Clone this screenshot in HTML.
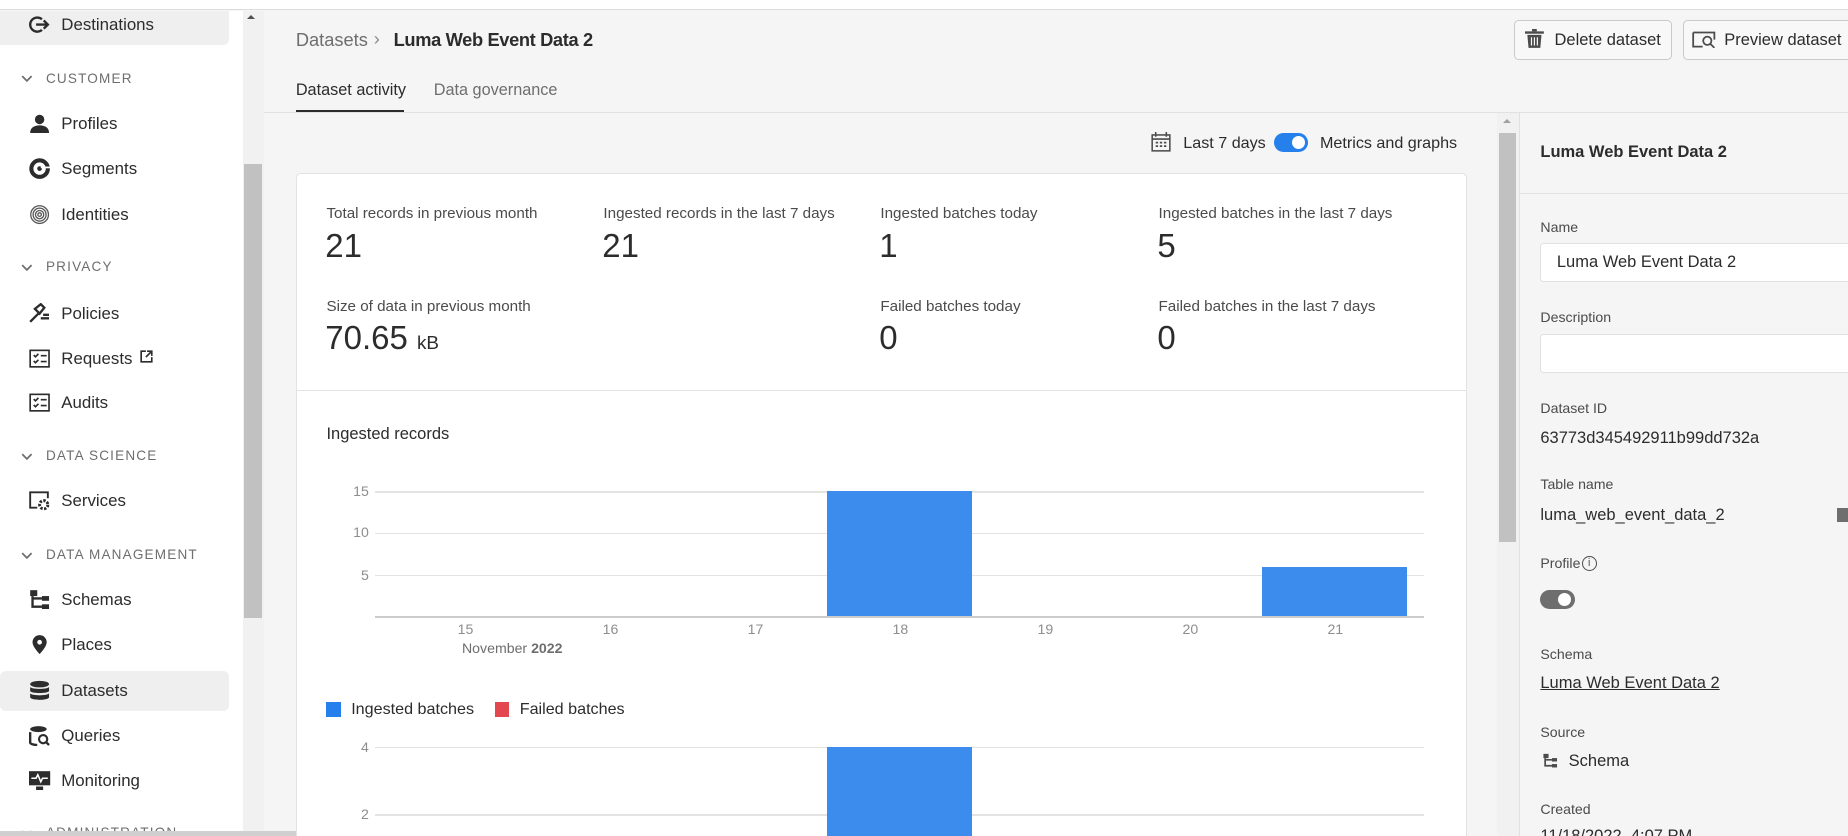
<!DOCTYPE html>
<html><head><meta charset="utf-8"><style>
html,body{margin:0;padding:0;overflow:hidden;background:#f5f5f5;width:1848px;height:836px}
#r{position:relative;width:1568px;height:709px;zoom:1.17857;overflow:hidden;font-family:"Liberation Sans",sans-serif;color:#2c2c2c;background:#f5f5f5}
.a{position:absolute;white-space:nowrap}
.ni{font-size:14.3px;color:#2c2c2c;line-height:18px}
.sec{font-size:11.5px;color:#6e6e6e;letter-spacing:1px;line-height:14px}
.ic{position:absolute;left:25px;width:18px;height:18px}
.lbl{font-size:12.9px;color:#4b4b4b}
.val{font-size:28px;color:#2c2c2c;font-weight:300}
.gl{position:absolute;left:318px;width:890px;height:1px;background:#e3e3e3}
.yl{position:absolute;width:30px;text-align:right;font-size:12px;color:#8e8e8e}
.xl{position:absolute;font-size:12px;color:#8e8e8e;width:40px;text-align:center}
.pl{font-size:12px;color:#4b4b4b}
.pv{font-size:14px;color:#2c2c2c}
.bar{position:absolute;background:#3b8ced}
.chev{position:absolute;left:18px;width:10px;height:6px}
</style></head><body><div id="r">
<div class="a" style="left:0;top:0;width:1568px;height:8px;background:#fff;border-bottom:1px solid #dcdcdc"></div>
<div class="a" style="left:0;top:9px;width:206px;height:700px;background:#fff"></div>
<div class="a" style="left:0;top:9px;width:194px;height:29px;background:#efefef;border-radius:0 0 5px 0"></div>
<div class="a" style="left:0;top:569px;width:194px;height:34px;background:#efefef;border-radius:5px"></div>
<div class="a" style="left:206px;top:9px;width:18px;height:700px;background:#f1f1f1"></div>
<div class="a" style="left:207px;top:139px;width:15px;height:385px;background:#c1c1c1"></div>
<div class="a" style="left:210px;top:13px;width:0;height:0;border-left:4px solid transparent;border-right:4px solid transparent;border-bottom:4px solid #505050"></div>

<svg class="ic" style="top:12px" viewBox="0 0 18 18"><path d="M11 4.5A6 6 0 1 0 11 13.5" fill="none" stroke="#2c2c2c" stroke-width="2"/><path d="M6 9h10M12.5 5.5L16 9l-3.5 3.5" fill="none" stroke="#2c2c2c" stroke-width="2"/></svg>
<div class="a ni" style="left:52px;top:12px">Destinations</div>
<svg class="chev" style="top:64px" viewBox="0 0 10 6"><path d="M1 1l4 4 4-4" fill="none" stroke="#6e6e6e" stroke-width="1.5"/></svg><div class="a sec" style="left:39px;top:60px">CUSTOMER</div>
<svg class="ic" style="top:96px" viewBox="0 0 18 18"><circle cx="9" cy="5.5" r="4" fill="#2c2c2c"/><path d="M1 17c0-5 4-6.5 8-6.5s8 1.5 8 6.5z" fill="#2c2c2c"/></svg>
<div class="a ni" style="left:52px;top:96px">Profiles</div>
<svg class="ic" style="top:134px" viewBox="0 0 18 18"><circle cx="9" cy="9" r="7" fill="none" stroke="#2c2c2c" stroke-width="3.5"/><circle cx="9" cy="9" r="2" fill="#2c2c2c"/><path d="M10 8h8" stroke="#fff" stroke-width="1.5"/></svg>
<div class="a ni" style="left:52px;top:134px">Segments</div>
<svg class="ic" style="top:173px" viewBox="0 0 18 18" fill="none" stroke="#555" stroke-width="1.1"><circle cx="9" cy="9" r="7.5"/><circle cx="9" cy="9" r="5.5"/><circle cx="9" cy="9" r="3.5"/><circle cx="9" cy="9" r="1.5"/></svg>
<div class="a ni" style="left:52px;top:173px">Identities</div>
<svg class="chev" style="top:224px" viewBox="0 0 10 6"><path d="M1 1l4 4 4-4" fill="none" stroke="#6e6e6e" stroke-width="1.5"/></svg><div class="a sec" style="left:39px;top:220px">PRIVACY</div>
<svg class="ic" style="top:257px" viewBox="0 0 18 18"><path d="M1 16l7-7M5 5l5-4 3 3-4 5zM10 13h7M12 10h5" stroke="#2c2c2c" stroke-width="2" fill="none"/></svg>
<div class="a ni" style="left:52px;top:257px">Policies</div>
<svg class="ic" style="top:295px" viewBox="0 0 18 18" fill="none" stroke="#2c2c2c" stroke-width="1.4"><rect x="1" y="2" width="16" height="14"/><path d="M4 6l1.5 1.5L8 5M4 11l1.5 1.5L8 10M10 6.5h5M10 11.5h5"/></svg>
<div class="a ni" style="left:52px;top:295px">Requests</div>
<svg class="a" style="left:119px;top:297px" width="11" height="11" viewBox="0 0 11 11" fill="none" stroke="#2c2c2c" stroke-width="1.4"><path d="M5 1H1v9h9V6M6 1h4v4M10 1L5 6"/></svg>
<svg class="ic" style="top:333px" viewBox="0 0 18 18" fill="none" stroke="#2c2c2c" stroke-width="1.4"><rect x="1" y="2" width="16" height="14"/><path d="M4 6l1.5 1.5L8 5M4 11l1.5 1.5L8 10M10 6.5h5M10 11.5h5"/></svg>
<div class="a ni" style="left:52px;top:333px">Audits</div>
<svg class="chev" style="top:384px" viewBox="0 0 10 6"><path d="M1 1l4 4 4-4" fill="none" stroke="#6e6e6e" stroke-width="1.5"/></svg><div class="a sec" style="left:39px;top:380px">DATA SCIENCE</div>
<svg class="ic" style="top:416px" viewBox="0 0 18 18"><path d="M7 15H1V2h15v5" fill="none" stroke="#2c2c2c" stroke-width="1.6"/><circle cx="12.5" cy="12.5" r="3.5" fill="none" stroke="#2c2c2c" stroke-width="2.5" stroke-dasharray="2 1.2"/></svg>
<div class="a ni" style="left:52px;top:416px">Services</div>
<svg class="chev" style="top:468px" viewBox="0 0 10 6"><path d="M1 1l4 4 4-4" fill="none" stroke="#6e6e6e" stroke-width="1.5"/></svg><div class="a sec" style="left:39px;top:464px">DATA MANAGEMENT</div>
<svg class="ic" style="top:500px" viewBox="0 0 18 18" fill="#2c2c2c"><rect x="1" y="1" width="6" height="5"/><rect x="11" y="6" width="6" height="4"/><rect x="11" y="13" width="6" height="4"/><path d="M3 6v9h8M3 8h8" stroke="#2c2c2c" stroke-width="2" fill="none"/></svg>
<div class="a ni" style="left:52px;top:500px">Schemas</div>
<svg class="ic" style="top:538px" viewBox="0 0 18 18"><path d="M9 1a6 6 0 0 1 6 6c0 4-6 10-6 10S3 11 3 7a6 6 0 0 1 6-6z" fill="#2c2c2c"/><circle cx="9" cy="7" r="2" fill="#fff"/></svg>
<div class="a ni" style="left:52px;top:538px">Places</div>
<svg class="ic" style="top:577px" viewBox="0 0 18 18" fill="#2c2c2c"><ellipse cx="9" cy="3.5" rx="8" ry="2.8"/><path d="M1 6c2 2 14 2 16 0v3.5c-2 2-14 2-16 0zM1 11.5c2 2 14 2 16 0V15c-2 2.5-14 2.5-16 0z"/></svg>
<div class="a ni" style="left:52px;top:577px">Datasets</div>
<svg class="ic" style="top:615px" viewBox="0 0 18 18"><ellipse cx="8" cy="3.5" rx="7" ry="2.5" fill="#2c2c2c"/><path d="M1 6v9c0 1 3 2 6 2" fill="none" stroke="#2c2c2c" stroke-width="2"/><circle cx="12" cy="12" r="3.5" fill="none" stroke="#2c2c2c" stroke-width="1.8"/><path d="M14.5 14.5L17 17" stroke="#2c2c2c" stroke-width="2"/></svg>
<div class="a ni" style="left:52px;top:615px">Queries</div>
<svg class="ic" style="top:653px" viewBox="0 0 18 18"><rect x="0" y="1" width="18" height="12" fill="#2c2c2c"/><path d="M2 7h4l1.5-3 2.5 6 1.5-3H16" fill="none" stroke="#fff" stroke-width="1.3"/><rect x="6" y="14" width="6" height="3" fill="#2c2c2c"/></svg>
<div class="a ni" style="left:52px;top:653px">Monitoring</div>
<svg class="chev" style="top:704px" viewBox="0 0 10 6"><path d="M1 1l4 4 4-4" fill="none" stroke="#6e6e6e" stroke-width="1.5"/></svg><div class="a sec" style="left:39px;top:700px">ADMINISTRATION</div>
<div class="a" style="left:0;top:705px;width:375px;height:4px;background:#d0d0d0"></div>

<div class="a" style="left:224px;top:95px;width:1344px;height:1px;background:#e1e1e1"></div>
<div class="a" style="left:251px;top:25px;font-size:15.5px;color:#6e6e6e">Datasets</div>
<div class="a" style="left:317px;top:24px;font-size:16px;color:#8e8e8e">&#8250;</div>
<div class="a" style="left:334px;top:25px;font-size:15.5px;font-weight:bold;color:#2c2c2c;letter-spacing:-0.3px">Luma Web Event Data 2</div>
<div class="a" style="left:251px;top:69px;font-size:13.8px;color:#2c2c2c">Dataset activity</div>
<div class="a" style="left:251px;top:93px;width:92px;height:2px;background:#2c2c2c"></div>
<div class="a" style="left:368px;top:69px;font-size:13.8px;color:#6e6e6e">Data governance</div>
<div class="a" style="left:1285px;top:17px;width:132px;height:32px;border:1px solid #cacaca;border-radius:4px;background:#f8f8f8"></div>
<svg class="a" style="left:1294px;top:25px" width="16" height="16" viewBox="0 0 16 16" fill="#4b4b4b"><rect x="0" y="2" width="16" height="2"/><rect x="6" y="0" width="4" height="2"/><path d="M2 5h12l-1 11H3z"/><path d="M5.5 7v7M8 7v7M10.5 7v7" stroke="#f8f8f8" stroke-width="1"/></svg>
<div class="a" style="left:1319px;top:26px;font-size:14px;color:#2c2c2c">Delete dataset</div>
<div class="a" style="left:1428px;top:17px;width:150px;height:32px;border:1px solid #cacaca;border-radius:4px;background:#f8f8f8"></div>
<svg class="a" style="left:1436px;top:25px" width="20" height="16" viewBox="0 0 20 16" fill="none" stroke="#4b4b4b" stroke-width="1.5"><path d="M1 3h18v6M9 15H1V3"/><circle cx="13" cy="10" r="3.5"/><path d="M15.5 12.5L19 16"/></svg>
<div class="a" style="left:1463px;top:26px;font-size:14px;color:#2c2c2c">Preview dataset</div>

<svg class="a" style="left:977px;top:112px" width="17" height="17" viewBox="0 0 17 17" fill="none" stroke="#4b4b4b" stroke-width="1.3"><rect x="1" y="2.5" width="15" height="13.5"/><path d="M4 0v4M13 0v4M1 6h15"/><path d="M4 9h2M7.5 9h2M11 9h2M4 12h2M7.5 12h2M11 12h2" stroke-width="1.5"/></svg>
<div class="a" style="left:1004px;top:114px;font-size:13.7px">Last 7 days</div>
<div class="a" style="left:1081px;top:113px;width:29px;height:16px;border-radius:8px;background:#2680eb"></div>
<div class="a" style="left:1096px;top:115.5px;width:11px;height:11px;border-radius:6px;background:#fff"></div>
<div class="a" style="left:1120px;top:114px;font-size:13.7px">Metrics and graphs</div>

<div class="a" style="left:251px;top:147px;width:992px;height:580px;background:#fff;border:1px solid #e3e3e3;border-radius:4px"></div>
<div class="a" style="left:252px;top:331px;width:992px;height:1px;background:#e3e3e3"></div>
<div class="a lbl" style="left:277px;top:174px">Total records in previous month</div>
<div class="a val" style="left:276px;top:193px">21</div>
<div class="a lbl" style="left:512px;top:174px">Ingested records in the last 7 days</div>
<div class="a val" style="left:511px;top:193px">21</div>
<div class="a lbl" style="left:747px;top:174px">Ingested batches today</div>
<div class="a val" style="left:746px;top:193px">1</div>
<div class="a lbl" style="left:983px;top:174px">Ingested batches in the last 7 days</div>
<div class="a val" style="left:982px;top:193px">5</div>
<div class="a lbl" style="left:277px;top:253px">Size of data in previous month</div>
<div class="a val" style="left:276px;top:271px">70.65 <span style="font-size:16px;font-weight:normal">kB</span></div>
<div class="a lbl" style="left:747px;top:253px">Failed batches today</div>
<div class="a val" style="left:746px;top:271px">0</div>
<div class="a lbl" style="left:983px;top:253px">Failed batches in the last 7 days</div>
<div class="a val" style="left:982px;top:271px">0</div>

<div class="a" style="left:277px;top:361px;font-size:14px">Ingested records</div>
<div class="gl" style="top:417px"></div><div class="gl" style="top:452px"></div><div class="gl" style="top:488px"></div><div class="gl" style="top:523px;background:#ccc"></div>
<div class="yl" style="left:283px;top:410px">15</div><div class="yl" style="left:283px;top:445px">10</div><div class="yl" style="left:283px;top:481px">5</div>
<div class="bar" style="left:702px;top:417px;width:123px;height:106px"></div>
<div class="bar" style="left:1071px;top:481px;width:123px;height:42px"></div>
<div class="xl" style="left:375px;top:527px">15</div><div class="xl" style="left:498px;top:527px">16</div><div class="xl" style="left:621px;top:527px">17</div><div class="xl" style="left:744px;top:527px">18</div><div class="xl" style="left:867px;top:527px">19</div><div class="xl" style="left:990px;top:527px">20</div><div class="xl" style="left:1113px;top:527px">21</div>
<div class="a" style="left:392px;top:543px;font-size:12px;color:#6e6e6e">November <b>2022</b></div>

<div class="a" style="left:277px;top:596px;width:12px;height:12px;background:#2680eb"></div>
<div class="a" style="left:298px;top:594px;font-size:13.7px">Ingested batches</div>
<div class="a" style="left:420px;top:596px;width:12px;height:12px;background:#e34850"></div>
<div class="a" style="left:441px;top:594px;font-size:13.7px">Failed batches</div>
<div class="gl" style="top:634px"></div><div class="gl" style="top:691px"></div>
<div class="yl" style="left:283px;top:627px">4</div><div class="yl" style="left:283px;top:684px">2</div>
<div class="bar" style="left:702px;top:634px;width:123px;height:75px"></div>

<div class="a" style="left:1270px;top:96px;width:19px;height:613px;background:#f1f1f1"></div>
<div class="a" style="left:1272px;top:113px;width:14px;height:347px;background:#c1c1c1"></div>
<div class="a" style="left:1275px;top:101px;width:0;height:0;border-left:4px solid transparent;border-right:4px solid transparent;border-bottom:4px solid #a0a0a0"></div>

<div class="a" style="left:1289px;top:96px;width:1px;height:613px;background:#e1e1e1"></div>
<div class="a" style="left:1307px;top:121px;font-size:14px;font-weight:bold">Luma Web Event Data 2</div>
<div class="a" style="left:1290px;top:164px;width:278px;height:1px;background:#e1e1e1"></div>
<div class="a pl" style="left:1307px;top:186px">Name</div>
<div class="a" style="left:1307px;top:206px;width:270px;height:32px;background:#fff;border:1px solid #e1e1e1;border-radius:3px"></div>
<div class="a pv" style="left:1321px;top:215px">Luma Web Event Data 2</div>
<div class="a pl" style="left:1307px;top:262px">Description</div>
<div class="a" style="left:1307px;top:283px;width:270px;height:32px;background:#fff;border:1px solid #e1e1e1;border-radius:3px"></div>
<div class="a pl" style="left:1307px;top:339px">Dataset ID</div>
<div class="a pv" style="left:1307px;top:364px">63773d345492911b99dd732a</div>
<div class="a pl" style="left:1307px;top:404px">Table name</div>
<div class="a pv" style="left:1307px;top:429px">luma_web_event_data_2</div>
<div class="a" style="left:1559px;top:431px;width:9px;height:12px;background:#6e6e6e"></div>
<div class="a pl" style="left:1307px;top:471px">Profile</div>
<div class="a" style="left:1342px;top:472px;width:11px;height:11px;border:1.3px solid #4b4b4b;border-radius:50%;font-size:9px;line-height:11px;text-align:center;color:#4b4b4b">i</div>
<div class="a" style="left:1307px;top:501px;width:29px;height:16px;border-radius:8px;background:#6e6e6e"></div>
<div class="a" style="left:1322px;top:503.5px;width:11px;height:11px;border-radius:6px;background:#fff"></div>
<div class="a pl" style="left:1307px;top:548px">Schema</div>
<div class="a pv" style="left:1307px;top:572px;text-decoration:underline">Luma Web Event Data 2</div>
<div class="a pl" style="left:1307px;top:614px">Source</div>
<svg class="a" style="left:1308px;top:639px" width="14" height="13" viewBox="0 0 18 18" fill="#4b4b4b"><rect x="1" y="1" width="6" height="5"/><rect x="11" y="6" width="6" height="4"/><rect x="11" y="13" width="6" height="4"/><path d="M3 6v9h8M3 8h8" stroke="#4b4b4b" stroke-width="2" fill="none"/></svg>
<div class="a pv" style="left:1331px;top:638px">Schema</div>
<div class="a pl" style="left:1307px;top:680px">Created</div>
<div class="a pv" style="left:1307px;top:702px">11/18/2022, 4:07 PM</div>
</div></body></html>
